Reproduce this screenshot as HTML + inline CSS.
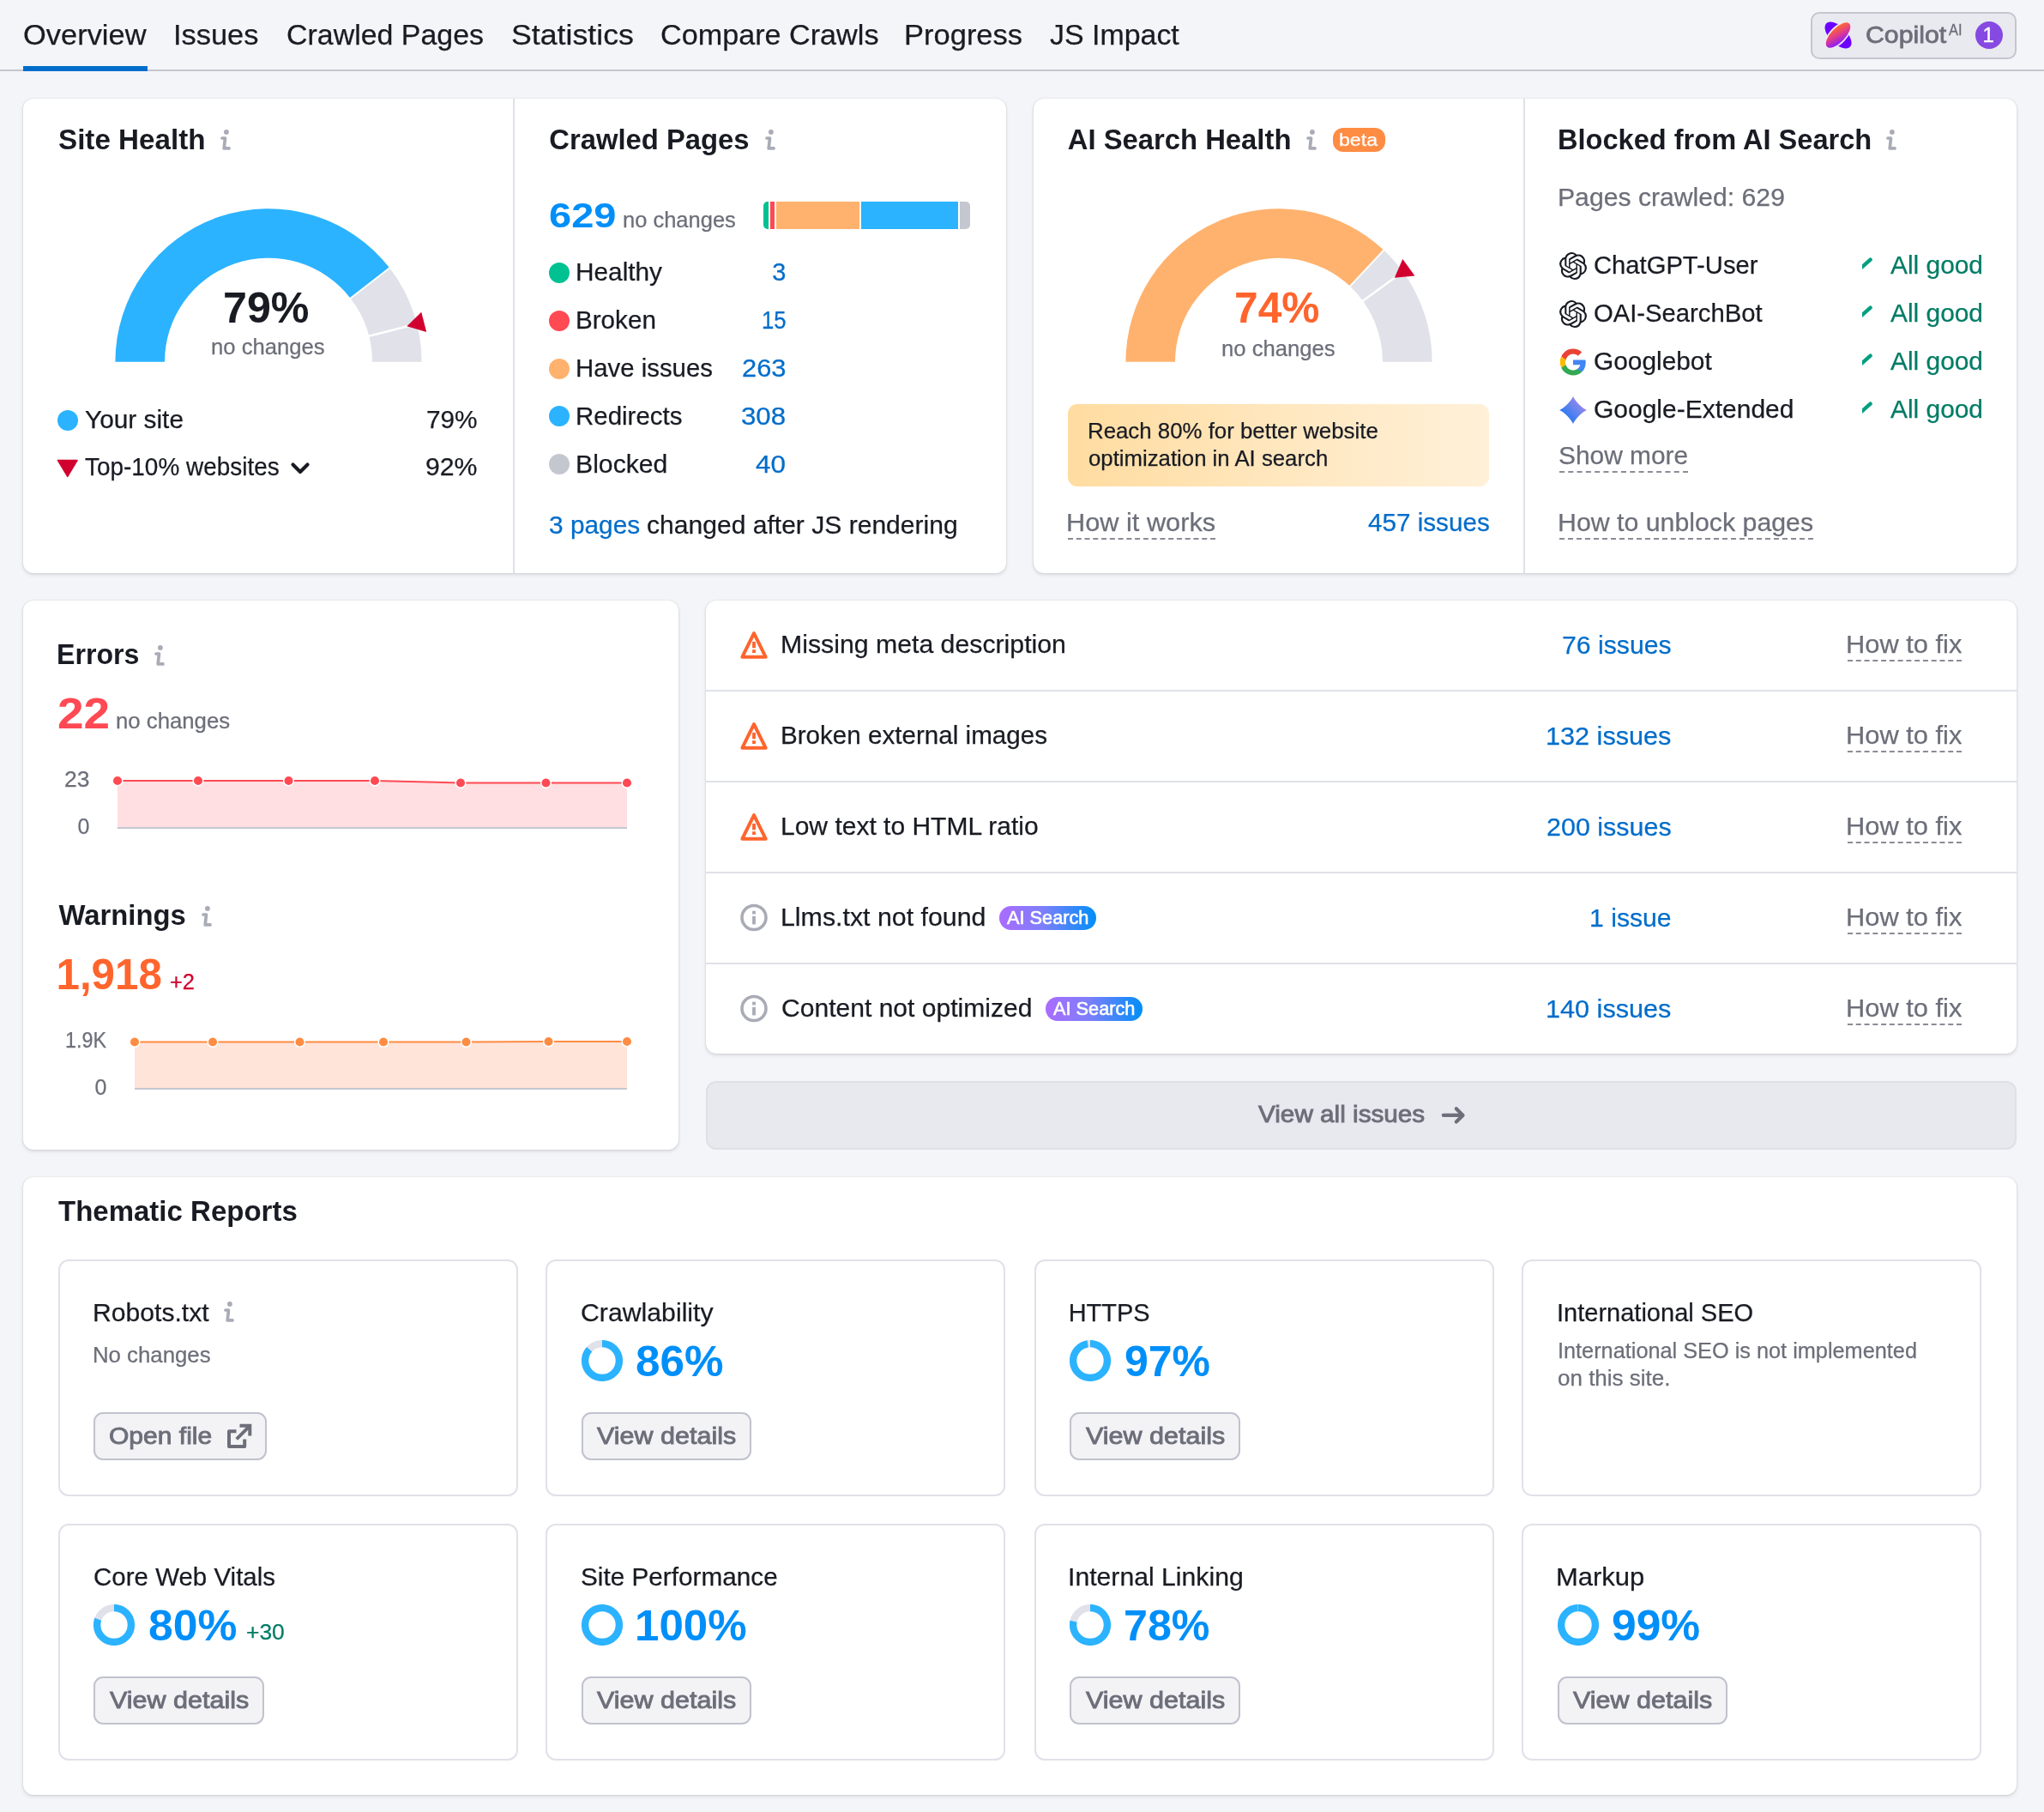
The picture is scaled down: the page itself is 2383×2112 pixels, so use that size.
<!DOCTYPE html>
<html lang="en"><head><meta charset="utf-8"><title>Site Audit Overview</title>
<style>
html,body{margin:0;padding:0;}
html{width:2383px;height:2112px;background:#f4f5f9;}
body{width:2383px;height:2112px;background:#f4f5f9;position:relative;font-family:"Liberation Sans", sans-serif;}
#root{position:absolute;left:0;top:0;width:2383px;height:2112px;overflow:hidden;will-change:transform;}
.a{position:absolute;}
.t{position:absolute;white-space:nowrap;line-height:1;transform-origin:0 0;}
</style></head>
<body>
<div id="root">
<div class="a" style="left:0px;top:81px;width:2383px;height:2px;background:#c4c7cf;"></div>
<div class="a" style="left:27px;top:77px;width:145px;height:5.599999999999994px;background:#006dca;"></div>
<div class="a" style="left:2111px;top:13.5px;width:239.5px;height:55.0px;background:#e8eaef;border-radius:10px;border:2px solid #c4c7cf;box-sizing:border-box;"></div>
<svg class="a" style="left:2125px;top:23px;" width="36" height="36" viewBox="0 0 36 36"><defs><linearGradient id="cg" x1="0.75" y1="0.1" x2="0.25" y2="0.9"><stop offset="0" stop-color="#ff6a2a"/><stop offset="0.5" stop-color="#e03a8f"/><stop offset="1" stop-color="#8a1cff"/></linearGradient></defs><ellipse cx="18" cy="18" rx="19.5" ry="10" fill="#6c00ff" transform="rotate(45 18 18)"/><ellipse cx="18" cy="18" rx="19.5" ry="9.2" fill="url(#cg)" stroke="#f0eaf6" stroke-width="1.6" transform="rotate(-46 18 18)"/></svg>
<div class="a" style="left:2303px;top:25px;width:32px;height:32px;border-radius:50%;background:#8649e1"></div>
<div class="a" style="left:27px;top:115px;width:1146px;height:553px;background:#fff;border-radius:12px;box-shadow:0 0 2px rgba(25,27,35,0.16),0 2px 4px rgba(25,27,35,0.12);"></div>
<div class="a" style="left:597.5px;top:115px;width:2.0px;height:553px;background:#e0e1e9;"></div>
<div class="a" style="left:1204.5px;top:115px;width:1146.5px;height:553px;background:#fff;border-radius:12px;box-shadow:0 0 2px rgba(25,27,35,0.16),0 2px 4px rgba(25,27,35,0.12);"></div>
<div class="a" style="left:1776px;top:115px;width:2px;height:553px;background:#e0e1e9;"></div>
<svg class="a" style="left:257px;top:151px;" width="14" height="25" viewBox="0 0 14 25"><circle cx="6.9" cy="2.9" r="2.9" fill="#a9abb6"/><path d="M2 10 H5.5 L4.2 21.9 H10" fill="none" stroke="#a9abb6" stroke-width="3.7" stroke-linecap="round" stroke-linejoin="round"/></svg>
<svg class="a" style="left:0;top:0" width="2383" height="700" viewBox="0 0 2383 700"><path d="M134.40 421.80 A178.6 178.6 0 0 1 454.12 312.33 L408.61 347.64 A121 121 0 0 0 192.00 421.80 Z" fill="#2bb3ff"/><path d="M454.12 312.33 A178.6 178.6 0 0 1 491.60 421.80 L434.00 421.80 A121 121 0 0 0 408.61 347.64 Z" fill="#e0e1e9"/><line x1="407.82" y1="348.25" x2="454.91" y2="311.72" stroke="#fff" stroke-width="2.0"/><line x1="429.23" y1="391.96" x2="486.96" y2="377.14" stroke="#fff" stroke-width="2.6"/><path d="M474.37 380.37 L497.21 386.89 L491.24 363.65 Z" fill="#d1002f"/></svg>
<div class="a" style="left:67px;top:478px;width:24px;height:24px;border-radius:50%;background:#2bb3ff"></div>
<svg class="a" style="left:66px;top:535px;" width="26" height="22" viewBox="0 0 26 22"><path d="M1.5 1.5 H24 L12.75 20.3 Z" fill="#d1002f" stroke="#d1002f" stroke-width="1.5" stroke-linejoin="round"/></svg>
<svg class="a" style="left:338px;top:536px;" width="24" height="20" viewBox="0 0 24 20"><path d="M3.5 5.5 L12 14 L20.5 5.5" fill="none" stroke="#191b23" stroke-width="4.2" stroke-linecap="round" stroke-linejoin="round"/></svg>
<svg class="a" style="left:892px;top:151px;" width="14" height="25" viewBox="0 0 14 25"><circle cx="6.9" cy="2.9" r="2.9" fill="#a9abb6"/><path d="M2 10 H5.5 L4.2 21.9 H10" fill="none" stroke="#a9abb6" stroke-width="3.7" stroke-linecap="round" stroke-linejoin="round"/></svg>
<div class="a" style="left:890px;top:235px;width:241px;height:32px;border-radius:5px;overflow:hidden;background:#fff"><div class="a" style="left:0;top:0;width:6px;height:32px;background:#00c192"></div><div class="a" style="left:7.6px;top:0;width:5.6px;height:32px;background:#ff4953"></div><div class="a" style="left:15px;top:0;width:97.2px;height:32px;background:#ffb26e"></div><div class="a" style="left:113.8px;top:0;width:113.3px;height:32px;background:#2bb3ff"></div><div class="a" style="left:228.7px;top:0;width:12.3px;height:32px;background:#c4c7cf"></div></div>
<div class="a" style="left:640px;top:306.0px;width:24px;height:24px;border-radius:50%;background:#00c192"></div>
<div class="a" style="left:640px;top:361.8px;width:24px;height:24px;border-radius:50%;background:#ff4953"></div>
<div class="a" style="left:640px;top:417.6px;width:24px;height:24px;border-radius:50%;background:#ffb26e"></div>
<div class="a" style="left:640px;top:473.4px;width:24px;height:24px;border-radius:50%;background:#2bb3ff"></div>
<div class="a" style="left:640px;top:529.2px;width:24px;height:24px;border-radius:50%;background:#c4c7cf"></div>
<svg class="a" style="left:1523px;top:151px;" width="14" height="25" viewBox="0 0 14 25"><circle cx="6.9" cy="2.9" r="2.9" fill="#a9abb6"/><path d="M2 10 H5.5 L4.2 21.9 H10" fill="none" stroke="#a9abb6" stroke-width="3.7" stroke-linecap="round" stroke-linejoin="round"/></svg>
<div class="a" style="left:1554px;top:149px;width:61px;height:28px;background:#ff8c43;border-radius:12px;"></div>
<svg class="a" style="left:0;top:0" width="2383" height="700" viewBox="0 0 2383 700"><path d="M1312.40 421.80 A178.6 178.6 0 0 1 1613.26 291.61 L1573.83 333.59 A121 121 0 0 0 1370.00 421.80 Z" fill="#ffb26e"/><path d="M1613.26 291.61 A178.6 178.6 0 0 1 1669.60 421.80 L1612.00 421.80 A121 121 0 0 0 1573.83 333.59 Z" fill="#e0e1e9"/><line x1="1573.15" y1="334.32" x2="1613.94" y2="290.88" stroke="#fff" stroke-width="2.0"/><line x1="1588.08" y1="351.27" x2="1636.30" y2="316.23" stroke="#fff" stroke-width="2.6"/><path d="M1625.78 323.87 L1649.42 321.53 L1635.31 302.12 Z" fill="#d1002f"/></svg>
<div class="a" style="left:1245px;top:471px;width:491px;height:95.5px;background:linear-gradient(90deg,#ffdca0 0%,#ffe9c4 60%,#fff0d8 100%);border-radius:11px;"></div>
<div class="a" style="left:1245px;top:627px;width:171.5px;height:0;border-top:2px dashed #8a8c96;"></div>
<svg class="a" style="left:2199px;top:151px;" width="14" height="25" viewBox="0 0 14 25"><circle cx="6.9" cy="2.9" r="2.9" fill="#a9abb6"/><path d="M2 10 H5.5 L4.2 21.9 H10" fill="none" stroke="#a9abb6" stroke-width="3.7" stroke-linecap="round" stroke-linejoin="round"/></svg>
<svg class="a" style="left:2171px;top:299.0px;" width="14" height="18" viewBox="0 0 14 18"><path d="M-4 15.6 L9.6 3.6" fill="none" stroke="#009f81" stroke-width="4.4" stroke-linecap="round"/></svg>
<svg class="a" style="left:2171px;top:355.0px;" width="14" height="18" viewBox="0 0 14 18"><path d="M-4 15.6 L9.6 3.6" fill="none" stroke="#009f81" stroke-width="4.4" stroke-linecap="round"/></svg>
<svg class="a" style="left:2171px;top:411.0px;" width="14" height="18" viewBox="0 0 14 18"><path d="M-4 15.6 L9.6 3.6" fill="none" stroke="#009f81" stroke-width="4.4" stroke-linecap="round"/></svg>
<svg class="a" style="left:2171px;top:467.0px;" width="14" height="18" viewBox="0 0 14 18"><path d="M-4 15.6 L9.6 3.6" fill="none" stroke="#009f81" stroke-width="4.4" stroke-linecap="round"/></svg>
<div class="a" style="left:1818px;top:549px;width:149.5px;height:0;border-top:2px dashed #8a8c96;"></div>
<div class="a" style="left:1818px;top:627px;width:295.5px;height:0;border-top:2px dashed #8a8c96;"></div>
<div class="a" style="left:27px;top:700px;width:764px;height:640px;background:#fff;border-radius:12px;box-shadow:0 0 2px rgba(25,27,35,0.16),0 2px 4px rgba(25,27,35,0.12);"></div>
<svg class="a" style="left:180px;top:751.5px;" width="14" height="25" viewBox="0 0 14 25"><circle cx="6.9" cy="2.9" r="2.9" fill="#a9abb6"/><path d="M2 10 H5.5 L4.2 21.9 H10" fill="none" stroke="#a9abb6" stroke-width="3.7" stroke-linecap="round" stroke-linejoin="round"/></svg>
<svg class="a" style="left:0;top:890px" width="800" height="100" viewBox="0 0 800 100"><polygon points="137,75 137.0,20.0 231.0,20.0 336.5,20.0 437.0,20.0 537.0,22.5 636.5,22.5 731.0,22.5 731,75" fill="#ffdfe1"/><line x1="137" y1="75" x2="731" y2="75" stroke="#c4c7cf" stroke-width="2"/><polyline points="137.0,20.0 231.0,20.0 336.5,20.0 437.0,20.0 537.0,22.5 636.5,22.5 731.0,22.5" fill="none" stroke="#ff4953" stroke-width="2"/><circle cx="137" cy="20" r="5.8" fill="#ff4953" stroke="#fff" stroke-width="1.5"/><circle cx="231" cy="20" r="5.8" fill="#ff4953" stroke="#fff" stroke-width="1.5"/><circle cx="336.5" cy="20" r="5.8" fill="#ff4953" stroke="#fff" stroke-width="1.5"/><circle cx="437" cy="20" r="5.8" fill="#ff4953" stroke="#fff" stroke-width="1.5"/><circle cx="537" cy="22.5" r="5.8" fill="#ff4953" stroke="#fff" stroke-width="1.5"/><circle cx="636.5" cy="22.5" r="5.8" fill="#ff4953" stroke="#fff" stroke-width="1.5"/><circle cx="731" cy="22.5" r="5.8" fill="#ff4953" stroke="#fff" stroke-width="1.5"/></svg>
<svg class="a" style="left:235px;top:1055.5px;" width="14" height="25" viewBox="0 0 14 25"><circle cx="6.9" cy="2.9" r="2.9" fill="#a9abb6"/><path d="M2 10 H5.5 L4.2 21.9 H10" fill="none" stroke="#a9abb6" stroke-width="3.7" stroke-linecap="round" stroke-linejoin="round"/></svg>
<svg class="a" style="left:0;top:1194px" width="800" height="100" viewBox="0 0 800 100"><polygon points="157,75 157.0,20.5 248.0,20.5 349.5,20.5 447.0,20.5 543.5,20.5 639.5,20.0 731.0,20.0 731,75" fill="#ffe4d9"/><line x1="157" y1="75" x2="731" y2="75" stroke="#c4c7cf" stroke-width="2"/><polyline points="157.0,20.5 248.0,20.5 349.5,20.5 447.0,20.5 543.5,20.5 639.5,20.0 731.0,20.0" fill="none" stroke="#ff8c43" stroke-width="2"/><circle cx="157" cy="20.5" r="5.8" fill="#ff8c43" stroke="#fff" stroke-width="1.5"/><circle cx="248" cy="20.5" r="5.8" fill="#ff8c43" stroke="#fff" stroke-width="1.5"/><circle cx="349.5" cy="20.5" r="5.8" fill="#ff8c43" stroke="#fff" stroke-width="1.5"/><circle cx="447" cy="20.5" r="5.8" fill="#ff8c43" stroke="#fff" stroke-width="1.5"/><circle cx="543.5" cy="20.5" r="5.8" fill="#ff8c43" stroke="#fff" stroke-width="1.5"/><circle cx="639.5" cy="20" r="5.8" fill="#ff8c43" stroke="#fff" stroke-width="1.5"/><circle cx="731" cy="20" r="5.8" fill="#ff8c43" stroke="#fff" stroke-width="1.5"/></svg>
<div class="a" style="left:823px;top:700px;width:1528px;height:528px;background:#fff;border-radius:12px;box-shadow:0 0 2px rgba(25,27,35,0.16),0 2px 4px rgba(25,27,35,0.12);"></div>
<div class="a" style="left:823px;top:804px;width:1528px;height:2px;background:#e0e1e9;"></div>
<div class="a" style="left:823px;top:910px;width:1528px;height:2px;background:#e0e1e9;"></div>
<div class="a" style="left:823px;top:1016px;width:1528px;height:2px;background:#e0e1e9;"></div>
<div class="a" style="left:823px;top:1122px;width:1528px;height:2px;background:#e0e1e9;"></div>
<svg class="a" style="left:863px;top:735.3px;" width="32" height="33" viewBox="0 -0.5 32 33"><path d="M16 2.6 L29.6 30.2 H2.4 Z" fill="none" stroke="#ff642d" stroke-width="4" stroke-linejoin="round"/><rect x="14.1" y="12.4" width="3.8" height="7.4" fill="#ff642d"/><rect x="14.1" y="21.7" width="3.8" height="3.8" fill="#ff642d"/></svg>
<div class="a" style="left:2153.5px;top:768.5px;width:133.5px;height:0;border-top:2px dashed #8a8c96;"></div>
<svg class="a" style="left:863px;top:841.3px;" width="32" height="33" viewBox="0 -0.5 32 33"><path d="M16 2.6 L29.6 30.2 H2.4 Z" fill="none" stroke="#ff642d" stroke-width="4" stroke-linejoin="round"/><rect x="14.1" y="12.4" width="3.8" height="7.4" fill="#ff642d"/><rect x="14.1" y="21.7" width="3.8" height="3.8" fill="#ff642d"/></svg>
<div class="a" style="left:2153.5px;top:874.5px;width:133.5px;height:0;border-top:2px dashed #8a8c96;"></div>
<svg class="a" style="left:863px;top:947.3px;" width="32" height="33" viewBox="0 -0.5 32 33"><path d="M16 2.6 L29.6 30.2 H2.4 Z" fill="none" stroke="#ff642d" stroke-width="4" stroke-linejoin="round"/><rect x="14.1" y="12.4" width="3.8" height="7.4" fill="#ff642d"/><rect x="14.1" y="21.7" width="3.8" height="3.8" fill="#ff642d"/></svg>
<div class="a" style="left:2153.5px;top:980.5px;width:133.5px;height:0;border-top:2px dashed #8a8c96;"></div>
<svg class="a" style="left:863px;top:1053.3px;" width="32" height="33" viewBox="0 -0.5 32 33"><circle cx="16" cy="16" r="14" fill="none" stroke="#a9abb6" stroke-width="3.6"/><rect x="14.1" y="14.3" width="3.8" height="9.6" fill="#a9abb6"/><rect x="14.1" y="8.2" width="3.8" height="3.8" fill="#a9abb6"/></svg>
<div class="a" style="left:2153.5px;top:1086.5px;width:133.5px;height:0;border-top:2px dashed #8a8c96;"></div>
<div class="a" style="left:1165px;top:1056.0px;width:113px;height:28.0px;background:linear-gradient(90deg,#ab6cfe 0%,#7d7ffa 45%,#008ff8 100%);border-radius:14px;"></div>
<svg class="a" style="left:863px;top:1159.3px;" width="32" height="33" viewBox="0 -0.5 32 33"><circle cx="16" cy="16" r="14" fill="none" stroke="#a9abb6" stroke-width="3.6"/><rect x="14.1" y="14.3" width="3.8" height="9.6" fill="#a9abb6"/><rect x="14.1" y="8.2" width="3.8" height="3.8" fill="#a9abb6"/></svg>
<div class="a" style="left:2153.5px;top:1192.5px;width:133.5px;height:0;border-top:2px dashed #8a8c96;"></div>
<div class="a" style="left:1219px;top:1162.0px;width:113px;height:28.0px;background:linear-gradient(90deg,#ab6cfe 0%,#7d7ffa 45%,#008ff8 100%);border-radius:14px;"></div>
<div class="a" style="left:823px;top:1260px;width:1528px;height:80px;background:#e8e9ee;border-radius:12px;border:2px solid #dfe0e7;box-sizing:border-box;"></div>
<svg class="a" style="left:1679px;top:1286px;" width="32" height="28" viewBox="0 0 32 28"><path d="M3.8 13.9 H26.3 M18.8 6.3 L26.5 13.9 L18.8 21.5" fill="none" stroke="#6c6e79" stroke-width="4.2" stroke-linecap="round" stroke-linejoin="round"/></svg>
<div class="a" style="left:27px;top:1372px;width:2324px;height:719.5px;background:#fff;border-radius:12px;box-shadow:0 0 2px rgba(25,27,35,0.16),0 2px 4px rgba(25,27,35,0.12);"></div>
<div class="a" style="left:67.5px;top:1468px;width:536.0px;height:276px;background:#fff;border-radius:12px;border:2px solid #e0e1e9;box-sizing:border-box;"></div>
<div class="a" style="left:636px;top:1468px;width:536px;height:276px;background:#fff;border-radius:12px;border:2px solid #e0e1e9;box-sizing:border-box;"></div>
<div class="a" style="left:1205.5px;top:1468px;width:536.0px;height:276px;background:#fff;border-radius:12px;border:2px solid #e0e1e9;box-sizing:border-box;"></div>
<div class="a" style="left:1774px;top:1468px;width:536px;height:276px;background:#fff;border-radius:12px;border:2px solid #e0e1e9;box-sizing:border-box;"></div>
<div class="a" style="left:67.5px;top:1776px;width:536.0px;height:276px;background:#fff;border-radius:12px;border:2px solid #e0e1e9;box-sizing:border-box;"></div>
<div class="a" style="left:636px;top:1776px;width:536px;height:276px;background:#fff;border-radius:12px;border:2px solid #e0e1e9;box-sizing:border-box;"></div>
<div class="a" style="left:1205.5px;top:1776px;width:536.0px;height:276px;background:#fff;border-radius:12px;border:2px solid #e0e1e9;box-sizing:border-box;"></div>
<div class="a" style="left:1774px;top:1776px;width:536px;height:276px;background:#fff;border-radius:12px;border:2px solid #e0e1e9;box-sizing:border-box;"></div>
<svg class="a" style="left:261px;top:1517px;" width="14" height="25" viewBox="0 0 14 25"><circle cx="6.9" cy="2.9" r="2.9" fill="#a9abb6"/><path d="M2 10 H5.5 L4.2 21.9 H10" fill="none" stroke="#a9abb6" stroke-width="3.7" stroke-linecap="round" stroke-linejoin="round"/></svg>
<div class="a" style="left:109px;top:1646px;width:202px;height:55.5px;background:#f3f3f6;border-radius:11px;border:2px solid #c0c3cc;box-sizing:border-box;"></div>
<svg class="a" style="left:264px;top:1659px;" width="31" height="31" viewBox="0 0 31 31"><path d="M11.5 9.3 H3 V26.9 H21.2 V18.5" fill="none" stroke="#6c6e79" stroke-width="4" stroke-linejoin="round"/><path d="M15.5 2.8 H27.3 V14.6 M26.8 3.3 L11.8 18.3" fill="none" stroke="#6c6e79" stroke-width="4" stroke-linejoin="miter"/></svg>
<svg class="a" style="left:677.5px;top:1562px;" width="48" height="48" viewBox="0 0 48 48"><circle cx="24" cy="24" r="19.9" fill="none" stroke="#e0e1e9" stroke-width="8.3"/><circle cx="24" cy="24" r="19.9" fill="none" stroke="#2bb3ff" stroke-width="8.3" stroke-dasharray="107.53 125.04" transform="rotate(-90 24 24)"/></svg>
<div class="a" style="left:677.5px;top:1646px;width:198.5px;height:55.5px;background:#f3f3f6;border-radius:11px;border:2px solid #c0c3cc;box-sizing:border-box;"></div>
<svg class="a" style="left:1247.0px;top:1562px;" width="48" height="48" viewBox="0 0 48 48"><circle cx="24" cy="24" r="19.9" fill="none" stroke="#e0e1e9" stroke-width="8.3"/><circle cx="24" cy="24" r="19.9" fill="none" stroke="#2bb3ff" stroke-width="8.3" stroke-dasharray="121.28 125.04" transform="rotate(-90 24 24)"/></svg>
<div class="a" style="left:1247.0px;top:1646px;width:198.5px;height:55.5px;background:#f3f3f6;border-radius:11px;border:2px solid #c0c3cc;box-sizing:border-box;"></div>
<svg class="a" style="left:109.0px;top:1870px;" width="48" height="48" viewBox="0 0 48 48"><circle cx="24" cy="24" r="19.9" fill="none" stroke="#e0e1e9" stroke-width="8.3"/><circle cx="24" cy="24" r="19.9" fill="none" stroke="#2bb3ff" stroke-width="8.3" stroke-dasharray="100.03 125.04" transform="rotate(-90 24 24)"/></svg>
<div class="a" style="left:109.0px;top:1954px;width:198.5px;height:55.5px;background:#f3f3f6;border-radius:11px;border:2px solid #c0c3cc;box-sizing:border-box;"></div>
<svg class="a" style="left:677.5px;top:1870px;" width="48" height="48" viewBox="0 0 48 48"><circle cx="24" cy="24" r="19.9" fill="none" stroke="#e0e1e9" stroke-width="8.3"/><circle cx="24" cy="24" r="19.9" fill="none" stroke="#2bb3ff" stroke-width="8.3" stroke-dasharray="125.04 125.04" transform="rotate(-90 24 24)"/></svg>
<div class="a" style="left:677.5px;top:1954px;width:198.5px;height:55.5px;background:#f3f3f6;border-radius:11px;border:2px solid #c0c3cc;box-sizing:border-box;"></div>
<svg class="a" style="left:1247.0px;top:1870px;" width="48" height="48" viewBox="0 0 48 48"><circle cx="24" cy="24" r="19.9" fill="none" stroke="#e0e1e9" stroke-width="8.3"/><circle cx="24" cy="24" r="19.9" fill="none" stroke="#2bb3ff" stroke-width="8.3" stroke-dasharray="97.53 125.04" transform="rotate(-90 24 24)"/></svg>
<div class="a" style="left:1247.0px;top:1954px;width:198.5px;height:55.5px;background:#f3f3f6;border-radius:11px;border:2px solid #c0c3cc;box-sizing:border-box;"></div>
<svg class="a" style="left:1815.5px;top:1870px;" width="48" height="48" viewBox="0 0 48 48"><circle cx="24" cy="24" r="19.9" fill="none" stroke="#e0e1e9" stroke-width="8.3"/><circle cx="24" cy="24" r="19.9" fill="none" stroke="#2bb3ff" stroke-width="8.3" stroke-dasharray="123.79 125.04" transform="rotate(-90 24 24)"/></svg>
<div class="a" style="left:1815.5px;top:1954px;width:198.5px;height:55.5px;background:#f3f3f6;border-radius:11px;border:2px solid #c0c3cc;box-sizing:border-box;"></div>
<svg class="a" style="left:1818px;top:293.5px;" width="32" height="32" viewBox="0 0 32 32"><path transform="scale(1.3333)" fill="#191b23" d="M22.2819 9.8211a5.9847 5.9847 0 0 0-.5157-4.9108 6.0462 6.0462 0 0 0-6.5098-2.9A6.0651 6.0651 0 0 0 4.9807 4.1818a5.9847 5.9847 0 0 0-3.9977 2.9 6.0462 6.0462 0 0 0 .7427 7.0966 5.98 5.98 0 0 0 .511 4.9107 6.051 6.051 0 0 0 6.5146 2.9001A5.9847 5.9847 0 0 0 13.2599 24a6.0557 6.0557 0 0 0 5.7718-4.2058 5.9894 5.9894 0 0 0 3.9977-2.9001 6.0557 6.0557 0 0 0-.7475-7.0729zm-9.022 12.6081a4.4755 4.4755 0 0 1-2.8764-1.0408l.1419-.0804 4.7783-2.7582a.7948.7948 0 0 0 .3927-.6813v-6.7369l2.02 1.1686a.071.071 0 0 1 .038.052v5.5826a4.504 4.504 0 0 1-4.4945 4.4944zm-9.6607-4.1254a4.4708 4.4708 0 0 1-.5346-3.0137l.142.0852 4.783 2.7582a.7712.7712 0 0 0 .7806 0l5.8428-3.3685v2.3324a.0804.0804 0 0 1-.0332.0615L9.74 19.9502a4.4992 4.4992 0 0 1-6.1408-1.6464zM2.3408 7.8956a4.485 4.485 0 0 1 2.3655-1.9728V11.6a.7664.7664 0 0 0 .3879.6765l5.8144 3.3543-2.0201 1.1685a.0757.0757 0 0 1-.071 0l-4.8303-2.7865A4.504 4.504 0 0 1 2.3408 7.872zm16.5963 3.8558L13.1038 8.364 15.1192 7.2a.0757.0757 0 0 1 .071 0l4.8303 2.7913a4.4944 4.4944 0 0 1-.6765 8.1042v-5.6772a.79.79 0 0 0-.407-.667zm2.0107-3.0231l-.142-.0852-4.7735-2.7818a.7759.7759 0 0 0-.7854 0L9.409 9.2297V6.8974a.0662.0662 0 0 1 .0284-.0615l4.8303-2.7866a4.4992 4.4992 0 0 1 6.6802 4.66zM8.3065 12.863l-2.02-1.1638a.0804.0804 0 0 1-.038-.0567V6.0742a4.4992 4.4992 0 0 1 7.3757-3.4537l-.142.0805L8.704 5.459a.7948.7948 0 0 0-.3927.6813zm1.0976-2.3654l2.602-1.4998 2.6069 1.4998v2.9994l-2.5974 1.4997-2.6067-1.4997Z"/></svg>
<svg class="a" style="left:1818px;top:349.5px;" width="32" height="32" viewBox="0 0 32 32"><path transform="scale(1.3333)" fill="#191b23" d="M22.2819 9.8211a5.9847 5.9847 0 0 0-.5157-4.9108 6.0462 6.0462 0 0 0-6.5098-2.9A6.0651 6.0651 0 0 0 4.9807 4.1818a5.9847 5.9847 0 0 0-3.9977 2.9 6.0462 6.0462 0 0 0 .7427 7.0966 5.98 5.98 0 0 0 .511 4.9107 6.051 6.051 0 0 0 6.5146 2.9001A5.9847 5.9847 0 0 0 13.2599 24a6.0557 6.0557 0 0 0 5.7718-4.2058 5.9894 5.9894 0 0 0 3.9977-2.9001 6.0557 6.0557 0 0 0-.7475-7.0729zm-9.022 12.6081a4.4755 4.4755 0 0 1-2.8764-1.0408l.1419-.0804 4.7783-2.7582a.7948.7948 0 0 0 .3927-.6813v-6.7369l2.02 1.1686a.071.071 0 0 1 .038.052v5.5826a4.504 4.504 0 0 1-4.4945 4.4944zm-9.6607-4.1254a4.4708 4.4708 0 0 1-.5346-3.0137l.142.0852 4.783 2.7582a.7712.7712 0 0 0 .7806 0l5.8428-3.3685v2.3324a.0804.0804 0 0 1-.0332.0615L9.74 19.9502a4.4992 4.4992 0 0 1-6.1408-1.6464zM2.3408 7.8956a4.485 4.485 0 0 1 2.3655-1.9728V11.6a.7664.7664 0 0 0 .3879.6765l5.8144 3.3543-2.0201 1.1685a.0757.0757 0 0 1-.071 0l-4.8303-2.7865A4.504 4.504 0 0 1 2.3408 7.872zm16.5963 3.8558L13.1038 8.364 15.1192 7.2a.0757.0757 0 0 1 .071 0l4.8303 2.7913a4.4944 4.4944 0 0 1-.6765 8.1042v-5.6772a.79.79 0 0 0-.407-.667zm2.0107-3.0231l-.142-.0852-4.7735-2.7818a.7759.7759 0 0 0-.7854 0L9.409 9.2297V6.8974a.0662.0662 0 0 1 .0284-.0615l4.8303-2.7866a4.4992 4.4992 0 0 1 6.6802 4.66zM8.3065 12.863l-2.02-1.1638a.0804.0804 0 0 1-.038-.0567V6.0742a4.4992 4.4992 0 0 1 7.3757-3.4537l-.142.0805L8.704 5.459a.7948.7948 0 0 0-.3927.6813zm1.0976-2.3654l2.602-1.4998 2.6069 1.4998v2.9994l-2.5974 1.4997-2.6067-1.4997Z"/></svg>
<svg class="a" style="left:1817.6px;top:405.8px;" width="32" height="32" viewBox="0 0 32 32"><path d="M30.7 16.4c0-1-.1-2-.3-3H16v5.8h8.3c-.4 1.9-1.5 3.5-3.1 4.6v3.8h5c2.9-2.7 4.5-6.6 4.5-11.2z" fill="#4285f4"/><path d="M16 31.5c4.1 0 7.6-1.4 10.1-3.7l-5-3.8c-1.4.9-3.1 1.5-5.1 1.5-4 0-7.3-2.700-8.5-6.300H2.400v3.900C4.900 28.100 10 31.500 16 31.500z" fill="#34a853"/><path d="M7.500 19.200c-.3-.9-.5-1.900-.5-3s.2-2.100.5-3V9.300H2.400C1.400 11.300.8 13.600.8 16s.6 4.700 1.600 6.700l5.100-3.500z" fill="#fbbc05"/><path d="M16 6.500c2.200 0 4.200.8 5.800 2.300l4.400-4.400C23.600 2 20.100.5 16 .5 10 .5 4.900 3.900 2.400 9.300l5.100 3.900c1.200-3.600 4.500-6.700 8.500-6.700z" fill="#ea4335"/></svg>
<svg class="a" style="left:1818px;top:462px;" width="32" height="32" viewBox="0 0 32 32"><defs><linearGradient id="gm" x1="0" y1="1" x2="1" y2="0"><stop offset="0.15" stop-color="#1b74f5"/><stop offset="0.5" stop-color="#5f83ee"/><stop offset="0.85" stop-color="#a587ee"/></linearGradient></defs><path d="M16 0 C17.8 5 27 14.2 32 16 C27 17.8 17.8 27 16 32 C14.2 27 5 17.8 0 16 C5 14.2 14.2 5 16 0 Z" fill="url(#gm)"/></svg>
<span class="t" style="top:24.72px;font-size:32.81px;color:#191b23;transform:scaleX(1.0502);-webkit-text-stroke:0.25px #191b23;left:26.97px;">Overview</span>
<span class="t" style="top:24.72px;font-size:32.81px;color:#191b23;transform:scaleX(1.0488);-webkit-text-stroke:0.25px #191b23;left:202.42px;">Issues</span>
<span class="t" style="top:24.72px;font-size:32.81px;color:#191b23;transform:scaleX(1.0339);-webkit-text-stroke:0.25px #191b23;left:333.88px;">Crawled Pages</span>
<span class="t" style="top:24.72px;font-size:32.81px;color:#191b23;transform:scaleX(1.0890);-webkit-text-stroke:0.25px #191b23;left:595.98px;">Statistics</span>
<span class="t" style="top:24.72px;font-size:32.81px;color:#191b23;transform:scaleX(1.0420);-webkit-text-stroke:0.25px #191b23;left:769.86px;">Compare Crawls</span>
<span class="t" style="top:24.72px;font-size:32.81px;color:#191b23;transform:scaleX(1.0520);-webkit-text-stroke:0.25px #191b23;left:1053.77px;">Progress</span>
<span class="t" style="top:24.72px;font-size:32.81px;color:#191b23;transform:scaleX(1.0341);-webkit-text-stroke:0.25px #191b23;left:1224.07px;">JS Impact</span>
<span class="t" style="top:25.82px;font-size:28.33px;color:#6c6e79;transform:scaleX(1.0689);-webkit-text-stroke:0.8px #6c6e79;left:2175.06px;">Copilot</span>
<span class="t" style="top:25.70px;font-size:18.07px;color:#6c6e79;transform:scaleX(0.9106);-webkit-text-stroke:0.3px #6c6e79;left:2271.57px;">AI</span>
<span class="t" style="top:29.11px;font-size:23.85px;color:#fff;-webkit-text-stroke:0.4px #fff;left:2311.54px;">1</span>
<span class="t" style="top:146.72px;font-size:32.81px;color:#191b23;font-weight:700;transform:scaleX(1.0119);left:67.64px;">Site Health</span>
<span class="t" style="top:334.27px;font-size:49.29px;color:#191b23;font-weight:700;transform:scaleX(1.0187);left:260.34px;">79%</span>
<span class="t" style="top:391.83px;font-size:25.01px;color:#6c6e79;transform:scaleX(1.0259);-webkit-text-stroke:0.25px #6c6e79;left:245.80px;">no changes</span>
<span class="t" style="top:475.33px;font-size:28.91px;color:#191b23;transform:scaleX(1.0319);-webkit-text-stroke:0.25px #191b23;left:98.94px;">Your site</span>
<span class="t" style="top:475.33px;font-size:28.91px;color:#191b23;transform:scaleX(1.0299);-webkit-text-stroke:0.25px #191b23;left:496.97px;">79%</span>
<span class="t" style="top:529.73px;font-size:28.91px;color:#191b23;transform:scaleX(0.9661);-webkit-text-stroke:0.25px #191b23;left:98.97px;">Top-10% websites</span>
<span class="t" style="top:529.73px;font-size:28.91px;color:#191b23;transform:scaleX(1.0455);-webkit-text-stroke:0.25px #191b23;left:496.08px;">92%</span>
<span class="t" style="top:146.72px;font-size:32.81px;color:#191b23;font-weight:700;left:640.25px;">Crawled Pages</span>
<span class="t" style="top:230.55px;font-size:41.05px;color:#008ff8;font-weight:700;transform:scaleX(1.1455);left:639.88px;">629</span>
<span class="t" style="top:244.13px;font-size:25.01px;color:#6c6e79;transform:scaleX(1.0196);-webkit-text-stroke:0.25px #6c6e79;left:726.31px;">no changes</span>
<span class="t" style="top:303.33px;font-size:28.91px;color:#191b23;transform:scaleX(1.0305);-webkit-text-stroke:0.25px #191b23;left:671.16px;">Healthy</span>
<span class="t" style="top:303.33px;font-size:28.91px;color:#006dca;-webkit-text-stroke:0.25px #006dca;left:900.19px;">3</span>
<span class="t" style="top:359.13px;font-size:28.91px;color:#191b23;transform:scaleX(1.0247);-webkit-text-stroke:0.25px #191b23;left:671.17px;">Broken</span>
<span class="t" style="top:359.13px;font-size:28.91px;color:#006dca;transform:scaleX(0.8873);-webkit-text-stroke:0.25px #006dca;left:887.55px;">15</span>
<span class="t" style="top:414.93px;font-size:28.91px;color:#191b23;transform:scaleX(1.0160);-webkit-text-stroke:0.25px #191b23;left:671.19px;">Have issues</span>
<span class="t" style="top:414.93px;font-size:28.91px;color:#006dca;transform:scaleX(1.0657);-webkit-text-stroke:0.25px #006dca;left:864.95px;">263</span>
<span class="t" style="top:470.73px;font-size:28.91px;color:#191b23;transform:scaleX(1.0196);-webkit-text-stroke:0.25px #191b23;left:671.18px;">Redirects</span>
<span class="t" style="top:470.73px;font-size:28.91px;color:#006dca;transform:scaleX(1.0790);-webkit-text-stroke:0.25px #006dca;left:864.31px;">308</span>
<span class="t" style="top:526.53px;font-size:28.91px;color:#191b23;transform:scaleX(1.0445);-webkit-text-stroke:0.25px #191b23;left:671.12px;">Blocked</span>
<span class="t" style="top:526.53px;font-size:28.91px;color:#006dca;transform:scaleX(1.0868);-webkit-text-stroke:0.25px #006dca;left:881.28px;">40</span>
<span class="t" style="top:598.03px;font-size:28.91px;color:#006dca;transform:scaleX(1.0325);-webkit-text-stroke:0.25px #006dca;left:640.46px;">3 pages</span>
<span class="t" style="top:598.03px;font-size:28.91px;color:#191b23;transform:scaleX(1.0401);-webkit-text-stroke:0.25px #191b23;left:754.32px;">changed after JS rendering</span>
<span class="t" style="top:146.72px;font-size:32.81px;color:#191b23;font-weight:700;left:1244.78px;">AI Search Health</span>
<span class="t" style="top:152.78px;font-size:20.82px;color:#fff;transform:scaleX(1.1104);-webkit-text-stroke:0.25px #fff;left:1561.31px;">beta</span>
<span class="t" style="top:334.27px;font-size:49.29px;color:#ff642d;font-weight:700;transform:scaleX(1.0082);left:1439.36px;">74%</span>
<span class="t" style="top:393.83px;font-size:25.01px;color:#6c6e79;transform:scaleX(1.0259);-webkit-text-stroke:0.25px #6c6e79;left:1423.80px;">no changes</span>
<span class="t" style="top:490.13px;font-size:25.01px;color:#191b23;transform:scaleX(1.0329);-webkit-text-stroke:0.25px #191b23;left:1268.28px;">Reach 80% for better website</span>
<span class="t" style="top:522.03px;font-size:25.01px;color:#191b23;transform:scaleX(1.0305);-webkit-text-stroke:0.25px #191b23;left:1269.32px;">optimization in AI search</span>
<span class="t" style="top:594.53px;font-size:28.91px;color:#6c6e79;transform:scaleX(1.0629);-webkit-text-stroke:0.25px #6c6e79;left:1243.08px;">How it works</span>
<span class="t" style="top:594.53px;font-size:28.91px;color:#006dca;transform:scaleX(1.0257);-webkit-text-stroke:0.25px #006dca;left:1594.52px;">457 issues</span>
<span class="t" style="top:146.72px;font-size:32.81px;color:#191b23;font-weight:700;transform:scaleX(0.9930);left:1816.42px;">Blocked from AI Search</span>
<span class="t" style="top:216.03px;font-size:28.91px;color:#6c6e79;transform:scaleX(1.0434);-webkit-text-stroke:0.25px #6c6e79;left:1816.13px;">Pages crawled: 629</span>
<span class="t" style="top:294.53px;font-size:28.91px;color:#191b23;transform:scaleX(1.0101);-webkit-text-stroke:0.25px #191b23;left:1858.12px;">ChatGPT-User</span>
<span class="t" style="top:294.53px;font-size:28.91px;color:#007c65;transform:scaleX(1.0337);-webkit-text-stroke:0.25px #007c65;left:2203.54px;">All good</span>
<span class="t" style="top:350.53px;font-size:28.91px;color:#191b23;transform:scaleX(1.0113);-webkit-text-stroke:0.25px #191b23;left:1858.22px;">OAI-SearchBot</span>
<span class="t" style="top:350.53px;font-size:28.91px;color:#007c65;transform:scaleX(1.0337);-webkit-text-stroke:0.25px #007c65;left:2203.54px;">All good</span>
<span class="t" style="top:406.53px;font-size:28.91px;color:#191b23;transform:scaleX(1.0323);-webkit-text-stroke:0.25px #191b23;left:1858.10px;">Googlebot</span>
<span class="t" style="top:406.53px;font-size:28.91px;color:#007c65;transform:scaleX(1.0337);-webkit-text-stroke:0.25px #007c65;left:2203.54px;">All good</span>
<span class="t" style="top:462.53px;font-size:28.91px;color:#191b23;transform:scaleX(1.0376);-webkit-text-stroke:0.25px #191b23;left:1858.09px;">Google-Extended</span>
<span class="t" style="top:462.53px;font-size:28.91px;color:#007c65;transform:scaleX(1.0337);-webkit-text-stroke:0.25px #007c65;left:2203.54px;">All good</span>
<span class="t" style="top:517.33px;font-size:28.91px;color:#6c6e79;transform:scaleX(1.0341);-webkit-text-stroke:0.25px #6c6e79;left:1817.24px;">Show more</span>
<span class="t" style="top:594.53px;font-size:28.91px;color:#6c6e79;transform:scaleX(1.0480);-webkit-text-stroke:0.25px #6c6e79;left:1816.11px;">How to unblock pages</span>
<span class="t" style="top:747.22px;font-size:32.81px;color:#191b23;font-weight:700;transform:scaleX(0.9799);left:66.45px;">Errors</span>
<span class="t" style="top:807.27px;font-size:49.29px;color:#ff4953;font-weight:700;transform:scaleX(1.1145);left:66.70px;">22</span>
<span class="t" style="top:827.83px;font-size:25.01px;color:#6c6e79;transform:scaleX(1.0299);-webkit-text-stroke:0.25px #6c6e79;left:134.89px;">no changes</span>
<span class="t" style="top:895.83px;font-size:25.01px;color:#6c6e79;transform:scaleX(1.0607);-webkit-text-stroke:0.25px #6c6e79;left:75.17px;">23</span>
<span class="t" style="top:950.83px;font-size:25.01px;color:#6c6e79;-webkit-text-stroke:0.25px #6c6e79;left:90.57px;">0</span>
<span class="t" style="top:1051.22px;font-size:32.81px;color:#191b23;font-weight:700;left:68.57px;">Warnings</span>
<span class="t" style="top:1111.27px;font-size:49.29px;color:#ff642d;font-weight:700;left:65.50px;">1,918</span>
<span class="t" style="top:1131.83px;font-size:25.01px;color:#d1002f;transform:scaleX(1.0178);-webkit-text-stroke:0.25px #d1002f;left:198.36px;">+2</span>
<span class="t" style="top:1199.83px;font-size:25.01px;color:#6c6e79;transform:scaleX(0.9340);-webkit-text-stroke:0.25px #6c6e79;left:75.72px;">1.9K</span>
<span class="t" style="top:1254.83px;font-size:25.01px;color:#6c6e79;-webkit-text-stroke:0.25px #6c6e79;left:110.57px;">0</span>
<span class="t" style="top:736.53px;font-size:28.91px;color:#191b23;transform:scaleX(1.0466);-webkit-text-stroke:0.25px #191b23;left:910.12px;">Missing meta description</span>
<span class="t" style="top:737.53px;font-size:28.91px;color:#006dca;transform:scaleX(1.0452);-webkit-text-stroke:0.25px #006dca;left:1820.95px;">76 issues</span>
<span class="t" style="top:736.53px;font-size:28.91px;color:#6c6e79;transform:scaleX(1.0666);-webkit-text-stroke:0.25px #6c6e79;left:2151.57px;">How to fix</span>
<span class="t" style="top:842.53px;font-size:28.91px;color:#191b23;transform:scaleX(1.0241);-webkit-text-stroke:0.25px #191b23;left:910.17px;">Broken external images</span>
<span class="t" style="top:843.53px;font-size:28.91px;color:#006dca;transform:scaleX(1.0596);-webkit-text-stroke:0.25px #006dca;left:1802.17px;">132 issues</span>
<span class="t" style="top:842.53px;font-size:28.91px;color:#6c6e79;transform:scaleX(1.0666);-webkit-text-stroke:0.25px #6c6e79;left:2151.57px;">How to fix</span>
<span class="t" style="top:948.53px;font-size:28.91px;color:#191b23;transform:scaleX(1.0380);-webkit-text-stroke:0.25px #191b23;left:910.14px;">Low text to HTML ratio</span>
<span class="t" style="top:949.53px;font-size:28.91px;color:#006dca;transform:scaleX(1.0538);-webkit-text-stroke:0.25px #006dca;left:1802.97px;">200 issues</span>
<span class="t" style="top:948.53px;font-size:28.91px;color:#6c6e79;transform:scaleX(1.0666);-webkit-text-stroke:0.25px #6c6e79;left:2151.57px;">How to fix</span>
<span class="t" style="top:1054.53px;font-size:28.91px;color:#191b23;transform:scaleX(1.0494);-webkit-text-stroke:0.25px #191b23;left:910.11px;">Llms.txt not found</span>
<span class="t" style="top:1055.53px;font-size:28.91px;color:#006dca;transform:scaleX(1.0442);-webkit-text-stroke:0.25px #006dca;left:1853.20px;">1 issue</span>
<span class="t" style="top:1054.53px;font-size:28.91px;color:#6c6e79;transform:scaleX(1.0666);-webkit-text-stroke:0.25px #6c6e79;left:2151.57px;">How to fix</span>
<span class="t" style="top:1059.38px;font-size:22.12px;color:#fff;transform:scaleX(0.9831);-webkit-text-stroke:0.6px #fff;left:1174.06px;">AI Search</span>
<span class="t" style="top:1160.53px;font-size:28.91px;color:#191b23;transform:scaleX(1.0400);-webkit-text-stroke:0.25px #191b23;left:911.07px;">Content not optimized</span>
<span class="t" style="top:1161.53px;font-size:28.91px;color:#006dca;transform:scaleX(1.0596);-webkit-text-stroke:0.25px #006dca;left:1802.17px;">140 issues</span>
<span class="t" style="top:1160.53px;font-size:28.91px;color:#6c6e79;transform:scaleX(1.0666);-webkit-text-stroke:0.25px #6c6e79;left:2151.57px;">How to fix</span>
<span class="t" style="top:1165.38px;font-size:22.12px;color:#fff;transform:scaleX(0.9831);-webkit-text-stroke:0.6px #fff;left:1228.06px;">AI Search</span>
<span class="t" style="top:1285.26px;font-size:28.04px;color:#6c6e79;transform:scaleX(1.0593);-webkit-text-stroke:0.9px #6c6e79;left:1467.47px;">View all issues</span>
<span class="t" style="top:1396.22px;font-size:32.81px;color:#191b23;font-weight:700;transform:scaleX(1.0062);left:68.23px;">Thematic Reports</span>
<span class="t" style="top:1515.53px;font-size:28.91px;color:#191b23;transform:scaleX(1.0427);-webkit-text-stroke:0.25px #191b23;left:107.63px;">Robots.txt</span>
<span class="t" style="top:1566.83px;font-size:25.01px;color:#6c6e79;transform:scaleX(1.0308);-webkit-text-stroke:0.25px #6c6e79;left:107.99px;">No changes</span>
<span class="t" style="top:1659.56px;font-size:28.04px;color:#6c6e79;transform:scaleX(1.0718);-webkit-text-stroke:0.9px #6c6e79;left:126.68px;">Open file</span>
<span class="t" style="top:1515.53px;font-size:28.91px;color:#191b23;transform:scaleX(1.0461);-webkit-text-stroke:0.25px #191b23;left:677.06px;">Crawlability</span>
<span class="t" style="top:1561.57px;font-size:49.29px;color:#008ff8;font-weight:700;transform:scaleX(1.0389);left:741.47px;">86%</span>
<span class="t" style="top:1659.56px;font-size:28.04px;color:#6c6e79;transform:scaleX(1.0883);-webkit-text-stroke:0.9px #6c6e79;left:696.47px;">View details</span>
<span class="t" style="top:1515.53px;font-size:28.91px;color:#191b23;-webkit-text-stroke:0.25px #191b23;left:1245.73px;">HTTPS</span>
<span class="t" style="top:1561.57px;font-size:49.29px;color:#008ff8;font-weight:700;transform:scaleX(1.0143);left:1310.87px;">97%</span>
<span class="t" style="top:1659.56px;font-size:28.04px;color:#6c6e79;transform:scaleX(1.0883);-webkit-text-stroke:0.9px #6c6e79;left:1265.97px;">View details</span>
<span class="t" style="top:1515.53px;font-size:28.91px;color:#191b23;transform:scaleX(1.0039);-webkit-text-stroke:0.25px #191b23;left:1815.42px;">International SEO</span>
<span class="t" style="top:1562.03px;font-size:25.01px;color:#6c6e79;transform:scaleX(1.0117);-webkit-text-stroke:0.25px #6c6e79;left:1815.77px;">International SEO is not implemented</span>
<span class="t" style="top:1593.63px;font-size:25.01px;color:#6c6e79;transform:scaleX(1.0396);-webkit-text-stroke:0.25px #6c6e79;left:1816.01px;">on this site.</span>
<span class="t" style="top:1823.53px;font-size:28.91px;color:#191b23;transform:scaleX(1.0205);-webkit-text-stroke:0.25px #191b23;left:108.60px;">Core Web Vitals</span>
<span class="t" style="top:1869.57px;font-size:49.29px;color:#008ff8;font-weight:700;transform:scaleX(1.0493);left:172.96px;">80%</span>
<span class="t" style="top:1967.56px;font-size:28.04px;color:#6c6e79;transform:scaleX(1.0883);-webkit-text-stroke:0.9px #6c6e79;left:127.97px;">View details</span>
<span class="t" style="top:1889.83px;font-size:25.01px;color:#007c65;transform:scaleX(1.0566);-webkit-text-stroke:0.25px #007c65;left:286.81px;">+30</span>
<span class="t" style="top:1823.53px;font-size:28.91px;color:#191b23;transform:scaleX(1.0284);-webkit-text-stroke:0.25px #191b23;left:677.25px;">Site Performance</span>
<span class="t" style="top:1869.57px;font-size:49.29px;color:#008ff8;font-weight:700;transform:scaleX(1.0358);left:739.88px;">100%</span>
<span class="t" style="top:1967.56px;font-size:28.04px;color:#6c6e79;transform:scaleX(1.0883);-webkit-text-stroke:0.9px #6c6e79;left:696.47px;">View details</span>
<span class="t" style="top:1823.53px;font-size:28.91px;color:#191b23;transform:scaleX(1.0442);-webkit-text-stroke:0.25px #191b23;left:1245.31px;">Internal Linking</span>
<span class="t" style="top:1869.57px;font-size:49.29px;color:#008ff8;font-weight:700;transform:scaleX(1.0187);left:1310.44px;">78%</span>
<span class="t" style="top:1967.56px;font-size:28.04px;color:#6c6e79;transform:scaleX(1.0883);-webkit-text-stroke:0.9px #6c6e79;left:1265.97px;">View details</span>
<span class="t" style="top:1823.53px;font-size:28.91px;color:#191b23;transform:scaleX(1.0721);-webkit-text-stroke:0.25px #191b23;left:1814.06px;">Markup</span>
<span class="t" style="top:1869.57px;font-size:49.29px;color:#008ff8;font-weight:700;transform:scaleX(1.0457);left:1879.31px;">99%</span>
<span class="t" style="top:1967.56px;font-size:28.04px;color:#6c6e79;transform:scaleX(1.0883);-webkit-text-stroke:0.9px #6c6e79;left:1834.47px;">View details</span>
</div>
</body></html>
